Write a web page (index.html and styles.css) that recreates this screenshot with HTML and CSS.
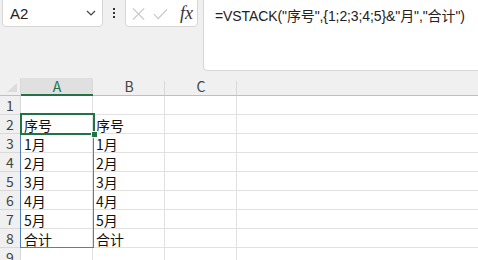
FILE: index.html
```html
<!DOCTYPE html>
<html>
	<head>
		<meta charset="UTF-8">
		<title>VSTACK</title>
		<link rel="stylesheet" href="styles.css">
	</head>
	<body>
		<!-- name box, buttons and formula bar -->
		<div class="toolbar">
			<div class="namebox">
				<span>A2</span>
				<svg class="chev" width="10" height="6" viewBox="0 0 10 6"><path d="M1 1 L5 5 L9 1" fill="none" stroke="#444" stroke-width="1.2"/></svg>
			</div>
			<div class="dots"><i></i><i></i><i></i></div>
			<div class="btnbox">
				<svg width="14" height="14" viewBox="0 0 14 14"><path d="M1 1 L13 13 M13 1 L1 13" stroke="#c4c4c4" stroke-width="1.2"/></svg>
				<svg width="16" height="12" viewBox="0 0 16 12"><path d="M1 6 L5.5 11 L15 1" fill="none" stroke="#c4c4c4" stroke-width="1.2"/></svg>
				<span class="fx">fx</span>
			</div>
			<div class="formula">=VSTACK("序号",{1;2;3;4;5}&amp;"月","合计")</div>
		</div>

		<!-- worksheet -->
		<div class="sheet">
			<div class="grid">
				<div class="corner"><span class="tri"></span></div>
				<div class="colhead sel">A</div>
				<div class="colhead">B</div>
				<div class="colhead">C</div>
				<div class="colhead last"></div>

				<div class="rowhead">1</div><div class="cell"></div><div class="cell"></div><div class="cell"></div><div class="cell last"></div>
				<div class="rowhead">2</div><div class="cell">序号</div><div class="cell">序号</div><div class="cell"></div><div class="cell last"></div>
				<div class="rowhead">3</div><div class="cell">1月</div><div class="cell">1月</div><div class="cell"></div><div class="cell last"></div>
				<div class="rowhead">4</div><div class="cell">2月</div><div class="cell">2月</div><div class="cell"></div><div class="cell last"></div>
				<div class="rowhead">5</div><div class="cell">3月</div><div class="cell">3月</div><div class="cell"></div><div class="cell last"></div>
				<div class="rowhead">6</div><div class="cell">4月</div><div class="cell">4月</div><div class="cell"></div><div class="cell last"></div>
				<div class="rowhead">7</div><div class="cell">5月</div><div class="cell">5月</div><div class="cell"></div><div class="cell last"></div>
				<div class="rowhead">8</div><div class="cell">合计</div><div class="cell">合计</div><div class="cell"></div><div class="cell last"></div>
				<div class="rowhead">9</div><div class="cell"></div><div class="cell"></div><div class="cell"></div><div class="cell last"></div>
			</div>

			<!-- spill range and active cell drawn over the grid -->
			<div class="grid overlay">
				<div class="spill"></div>
				<div class="active"><span class="handle"></span></div>
			</div>
		</div>
	</body>
</html>
```

FILE: styles.css
```css
html, body {
	margin: 0;
	background-color: #f0f0f0;
	overflow: hidden;
}
body {
	width: 478px;
	height: 260px;
	font-family: "Liberation Sans", "Noto Sans CJK SC", sans-serif;
	color: #222;
}
.toolbar {
	display: flex;
	align-items: flex-start;
	height: 78px;
}
.namebox {
	display: flex;
	align-items: center;
	justify-content: space-between;
	box-sizing: border-box;
	width: 101px;
	height: 31px;
	margin: -4px 0 0 2px;
	padding: 3px 6px 0 7px;
	background-color: white;
	border: 1px solid #d6d6d6;
	border-radius: 4px;
	font-size: 15px;
}
.dots {
	display: flex;
	flex-direction: column;
	gap: 2px;
	margin: 8px 0 0 10px;
}
	.dots i {
		display: block;
		width: 2px;
		height: 2px;
		background-color: #333;
	}
.btnbox {
	display: flex;
	align-items: center;
	box-sizing: border-box;
	width: 73px;
	height: 31px;
	margin: -4px 0 0 10px;
	padding: 4px 4px 0 6px;
	gap: 8px;
	background-color: white;
	border: 1px solid #d6d6d6;
	border-radius: 4px;
}
.fx {
	margin-left: 4px;
	font-family: "Liberation Serif", serif;
	font-style: italic;
	font-size: 18px;
	color: #333;
}
.formula {
	box-sizing: border-box;
	flex: 1;
	height: 75px;
	margin: -4px -6px 0 5px;
	padding: 8px 0 0 11px;
	background-color: white;
	border: 1px solid #d6d6d6;
	border-radius: 4px;
	font-size: 14px;
	letter-spacing: -0.1px;
}
.sheet {
	position: relative;
	background-color: white;
	font-family: "Noto Sans CJK SC", sans-serif;
	font-size: 14px;
}
.grid {
	display: grid;
	grid-template-columns: 21px 72px 72px 72px 1fr;
	grid-template-rows: 18px repeat(9, 19px);
}
.overlay {
	position: absolute;
	inset: 0;
}
.corner, .colhead, .rowhead {
	box-sizing: border-box;
	background-color: #f0f0f0;
	color: #444;
}
.corner {
	border-bottom: 1px solid #bfbfbf;
	border-right: 1px solid #d9d9d9;
	padding: 5px 0 0 7px;
}
	.tri {
		display: block;
		width: 0;
		height: 0;
		border-left: 10px solid transparent;
		border-bottom: 9px solid #dcdcdc;
	}
.colhead {
	text-align: center;
	line-height: 17px;
	border-bottom: 1px solid #bfbfbf;
	background: #f0f0f0 linear-gradient(#d9d9d9, #d9d9d9) right bottom / 1px 14px no-repeat;
}
.colhead.sel {
	background-color: #e0e0e0;
	color: #217346;
	border-bottom: 2px solid #217346;
}
.colhead.last {
	background-image: none;
}
.rowhead {
	text-align: center;
	line-height: 19px;
	border-right: 1px solid #d9d9d9;
	border-bottom: 1px solid #d9d9d9;
}
.cell {
	box-sizing: border-box;
	padding-left: 3px;
	line-height: 20px;
	color: #111;
	border-right: 1px solid #e1e1e1;
	border-bottom: 1px solid #e1e1e1;
	white-space: nowrap;
}
.cell.last {
	border-right: none;
}
.spill {
	grid-column: 2 / 3;
	grid-row: 3 / 10;
	margin: -1px -1px 0 -1px;
	border: 1px solid #4f7fc0;
}
.active {
	grid-column: 2 / 3;
	grid-row: 3 / 4;
	margin: -2px -2px -1px -1px;
	border: 2px solid #217346;
	display: flex;
	justify-content: flex-end;
	align-items: flex-end;
}
	.handle {
		width: 5px;
		height: 5px;
		margin: 0 -5px -5px 0;
		background-color: #217346;
		border: 1px solid white;
	}
```
